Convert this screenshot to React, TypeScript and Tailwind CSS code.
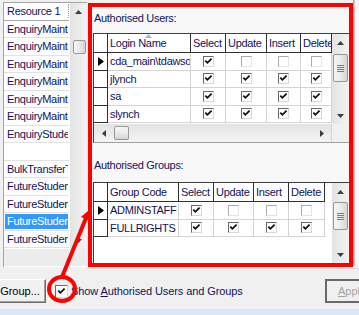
import React from "react";

const TXT = "text-[#12125a] tracking-[-0.3px]";

function Check() {
  return (
    <svg width="9" height="9" viewBox="0 0 9 9" className="block">
      <path d="M1.3 3.6 L3.4 5.8 L7.6 1.6" fill="none" stroke="#111" strokeWidth="1.8" />
    </svg>
  );
}

function Cb({ on, size = "w-[11px] h-[11px]" }: { on: boolean; size?: string }) {
  return (
    <span
      className={`${size} flex items-center justify-center bg-white border ${
        on
          ? "border-t-[#6a6a6a] border-l-[#6a6a6a] border-r-[#d8d8d8] border-b-[#d8d8d8]"
          : "border-t-[#ababab] border-l-[#ababab] border-r-[#e4e4e4] border-b-[#e4e4e4]"
      }`}
    >
      {on && <Check />}
    </span>
  );
}

function ArrowUp() {
  return (
    <svg width="7" height="4" viewBox="0 0 7 4" className="block">
      <path d="M0 4 L3.5 0 L7 4 Z" fill="#3c3c3c" />
    </svg>
  );
}
function ArrowDown() {
  return (
    <svg width="7" height="4" viewBox="0 0 7 4" className="block">
      <path d="M0 0 L3.5 4 L7 0 Z" fill="#3c3c3c" />
    </svg>
  );
}
function ArrowLeft() {
  return (
    <svg width="4" height="7" viewBox="0 0 4 7" className="block">
      <path d="M4 0 L0 3.5 L4 7 Z" fill="#3c3c3c" />
    </svg>
  );
}
function ArrowRight() {
  return (
    <svg width="4" height="7" viewBox="0 0 4 7" className="block">
      <path d="M0 0 L4 3.5 L0 7 Z" fill="#3c3c3c" />
    </svg>
  );
}

function Grip() {
  return (
    <div className="flex flex-col gap-[1px]">
      {[0, 1, 2, 3].map((i) => (
        <span key={i} className="w-[7px] h-[1px] bg-[#7c7c7c]" />
      ))}
    </div>
  );
}

function VScroll({ gapCls, thumbCls, grip, thumbX = "mx-[1px]" }: { gapCls: string; thumbCls: string; grip?: boolean; thumbX?: string }) {
  return (
    <div className="w-[17px] shrink-0 self-stretch flex flex-col bg-gradient-to-r from-[#e3e3e3] to-[#f3f3f3] overflow-hidden">
      <div className="h-[17px] shrink-0 flex items-center justify-center">
        <ArrowUp />
      </div>
      <div className={`${gapCls} shrink-0`} />
      <div
        className={`${thumbCls} ${thumbX} shrink-0 rounded-[2px] border border-[#979797] bg-gradient-to-r from-[#f6f6f6] via-[#eaeaea] to-[#d5d5d5] flex items-center justify-center`}
      >
        {grip && <Grip />}
      </div>
      <div className="flex-1" />
      <div className="h-[17px] shrink-0 flex items-center justify-center">
        <ArrowDown />
      </div>
    </div>
  );
}

function HScroll() {
  return (
    <div className="flex-1 flex flex-row bg-gradient-to-b from-[#e3e3e3] to-[#f3f3f3]">
      <div className="w-[20px] shrink-0 flex items-center justify-center">
        <ArrowLeft />
      </div>
      <div className="w-[0px] shrink-0" />
      <div className="w-[15px] shrink-0 my-[2px] rounded-[2px] border border-[#979797] bg-gradient-to-b from-[#f6f6f6] via-[#eaeaea] to-[#d5d5d5]" />
      <div className="flex-1" />
      <div className="w-[18px] shrink-0 flex items-center justify-center">
        <ArrowRight />
      </div>
    </div>
  );
}

function RowPointer() {
  return (
    <svg width="6" height="9" viewBox="0 0 6 9" className="block">
      <path d="M0 0 L6 4.5 L0 9 Z" fill="#000" />
    </svg>
  );
}

type Row = { name: string; checks: boolean[]; current?: boolean };

function DataGrid({
  cols,
  headers,
  rows,
  sortIcon,
}: {
  cols: string[];
  headers: string[];
  rows: Row[];
  sortIcon?: boolean;
}) {
  return (
    <div className="flex flex-col">
      <div className="flex h-[19px] shrink-0">
        <div className="w-[14px] shrink-0 border-r border-b border-[#303030] bg-white" />
        {headers.map((h, i) => (
          <div
            key={h}
            className={`${cols[i]} shrink-0 relative border-b border-r border-[#303030] bg-white pl-[2px] flex items-center overflow-hidden whitespace-nowrap leading-[14px] ${TXT}`}
          >
            {h}
            {sortIcon && i === 0 && (
              <svg width="7" height="4" viewBox="0 0 7 4" className="absolute left-[37px] top-0">
                <path d="M0 4 L3.5 0 L7 4 Z" fill="#9fb8d8" />
              </svg>
            )}
          </div>
        ))}
      </div>
      {rows.map((r) => (
        <div key={r.name} className="flex h-[17.5px] shrink-0">
          <div className="w-[14px] shrink-0 border-r border-b border-[#303030] bg-white flex items-center justify-center">
            {r.current && <RowPointer />}
          </div>
          <div
            className={`${cols[0]} shrink-0 border-r border-b border-[#d4d4d4] bg-white pl-[2px] flex items-center overflow-hidden whitespace-nowrap leading-[14px] ${TXT}`}
          >
            {r.name}
          </div>
          {r.checks.map((c, i) => (
            <div
              key={i}
              className={`${cols[i + 1]} shrink-0 border-r border-b border-[#d4d4d4] bg-white flex items-center justify-center overflow-hidden`}
            >
              <Cb on={c} />
            </div>
          ))}
        </div>
      ))}
    </div>
  );
}

const leftRows: { t: string; sel?: boolean }[] = [
  { t: "EnquiryMaintenance" },
  { t: "EnquiryMaintenance" },
  { t: "EnquiryMaintenance" },
  { t: "EnquiryMaintenance" },
  { t: "EnquiryMaintenance" },
  { t: "EnquiryMaintenance" },
  { t: "EnquiryStudent" },
  { t: "" },
  { t: "BulkTransferTool" },
  { t: "FutureStudent" },
  { t: "FutureStudent" },
  { t: "FutureStudent", sel: true },
  { t: "FutureStudent" },
];

export default function App() {
  return (
    <div className="relative w-[359px] h-[315px] overflow-hidden bg-[#f0f0f0] font-['Liberation_Sans',Arial,sans-serif] text-[11px]">
      {/* top section */}
      <div className="flex h-[268px]">
        {/* left list */}
        <div className="ml-[3px] mt-[2px] w-[84px] h-[265px] shrink-0 flex flex-col border-l border-t border-[#a3a3a3]">
          <div className="flex h-[246px] shrink-0 bg-white">
            <div className="w-[65px] shrink-0 flex flex-col overflow-hidden">
              <div className={`h-[17.7px] shrink-0 border-b border-[#a8a8a8] pl-[3px] flex items-center whitespace-nowrap overflow-hidden leading-[14px] ${TXT}`}>
                <span className="flex-1 overflow-hidden">Resource 1</span>
                <span className="w-[1px] h-[14px] shrink-0 border-r border-dotted border-[#9a9a9a]" />
              </div>
              {leftRows.map((r, i) => (
                <div key={i} className="h-[17.5px] shrink-0 border-b border-[#e2e2e2] flex items-stretch">
                  <div
                    className={`flex-1 pl-[2px] ml-[1px] mr-[1px] my-[0.5px] flex items-center whitespace-nowrap overflow-hidden leading-[14px] ${
                      r.sel ? "bg-[#3399ff] text-white tracking-[-0.3px]" : TXT
                    }`}
                  >
                    {r.t}
                  </div>
                </div>
              ))}
            </div>
            <div className="w-[1px] shrink-0" />
            <VScroll gapCls="h-[20px]" thumbCls="h-[14px]" thumbX="ml-[3px] mr-[1px]" />
          </div>
          <div className="flex-1 bg-[#ececec] border-b border-white" />
        </div>

        {/* red box */}
        <div className="ml-[1px] mt-[3px] w-[265px] h-[264px] shrink-0 border-4 border-[#ff0000] bg-[#f8f8f8] flex flex-col">
          <div className={`pt-[4px] pl-[2px] h-[26px] shrink-0 leading-[14px] ${TXT}`}>Authorised Users:</div>
          {/* users grid */}
          <div className="ml-[1px] w-[256px] h-[110px] shrink-0 flex flex-col border-l border-t border-[#404040] border-b-[#a0a0a0] border-b bg-white">
            <div className="flex h-[90px] shrink-0">
              <div className="flex-1 overflow-hidden">
                <DataGrid
                  sortIcon
                  cols={["w-[83px]", "w-[35px]", "w-[41px]", "w-[34px]", "w-[31px]"]}
                  headers={["Login Name", "Select", "Update", "Insert", "Delete"]}
                  rows={[
                    { name: "cda_main\\tdawson", checks: [true, false, false, false], current: true },
                    { name: "jlynch", checks: [true, true, true, true] },
                    { name: "sa", checks: [true, true, true, true] },
                    { name: "slynch", checks: [true, true, true, true] },
                  ]}
                />
              </div>
              <VScroll gapCls="h-[3px]" thumbCls="h-[28px]" grip />
            </div>
            <div className="flex h-[18px] shrink-0">
              <HScroll />
              <div className="w-[18px] shrink-0 border-l border-[#d6d6d6] bg-[#f0f0f0]" />
            </div>
          </div>
          <div className={`mt-[15px] mb-[10px] pl-[2px] h-[14px] shrink-0 leading-[14px] ${TXT}`}>Authorised Groups:</div>
          {/* groups grid */}
          <div className="ml-[1px] w-[256px] h-[81px] shrink-0 flex border-l border-t border-[#404040] bg-white">
            <div className="flex-1 overflow-hidden">
              <DataGrid
                cols={["w-[71px]", "w-[35px]", "w-[40px]", "w-[35px]", "w-[36px]"]}
                headers={["Group Code", "Select", "Update", "Insert", "Delete"]}
                rows={[
                  { name: "ADMINSTAFF", checks: [true, false, false, false], current: true },
                  { name: "FULLRIGHTS", checks: [true, true, true, true] },
                ]}
              />
            </div>
            <VScroll gapCls="h-[2px]" thumbCls="h-[28px]" grip />
          </div>
        </div>

        {/* window edge */}
        <div className="w-[1px] h-[266px] shrink-0 bg-[#a6a6a6]" />
        <div className="w-[1px] h-[266px] shrink-0 bg-[#c9c9c9]" />
        <div className="flex-1 h-[266px] bg-[#f8f8f8]" />
      </div>

      {/* bottom section */}
      <div className="h-[1px] ml-[87px] bg-[#dedede]" />
      <div className="h-[10px]" />
      <div className="flex items-center h-[24px]">
        <div className="ml-[-6px] w-[52px] h-[24px] shrink-0 flex items-center justify-center border border-t-white border-l-white border-r-[#6b6b6b] border-b-[#6b6b6b] shadow-[inset_-1px_-1px_0_#a0a0a0] bg-[#f0f0f0] text-black leading-[14px]">
          Group...
        </div>
        <div className="ml-[9px] shrink-0">
          <Cb on size="w-[13px] h-[13px]" />
        </div>
        <div className="ml-[3px] whitespace-nowrap leading-[14px] text-[#12125a] tracking-[-0.1px]">
          Show <span className="underline">A</span>uthorised Users and Groups
        </div>
        <div className="ml-auto mr-[-16px] w-[50px] h-[24px] shrink-0 border-2 border-[#6a6a6a] bg-[#f0f0f0] flex items-center pl-[11px] text-[#a3a3a3] leading-[14px]">
          <span className="underline">A</span>pply
        </div>
      </div>
      <div className="h-[6px]" />
      <div className="h-[6px] bg-[#dbe6f4]" />

      {/* annotation overlay */}
      <svg className="absolute left-0 top-0 pointer-events-none" width="359" height="315" viewBox="0 0 359 315">
        <ellipse cx="62" cy="289" rx="13" ry="12" fill="none" stroke="#ff0000" strokeWidth="4" />
        <line x1="62" y1="277" x2="86" y2="218" stroke="#ff0000" strokeWidth="4" />
        <polygon points="89,210 90,221 81,217" fill="#ff0000" />
      </svg>
    </div>
  );
}
